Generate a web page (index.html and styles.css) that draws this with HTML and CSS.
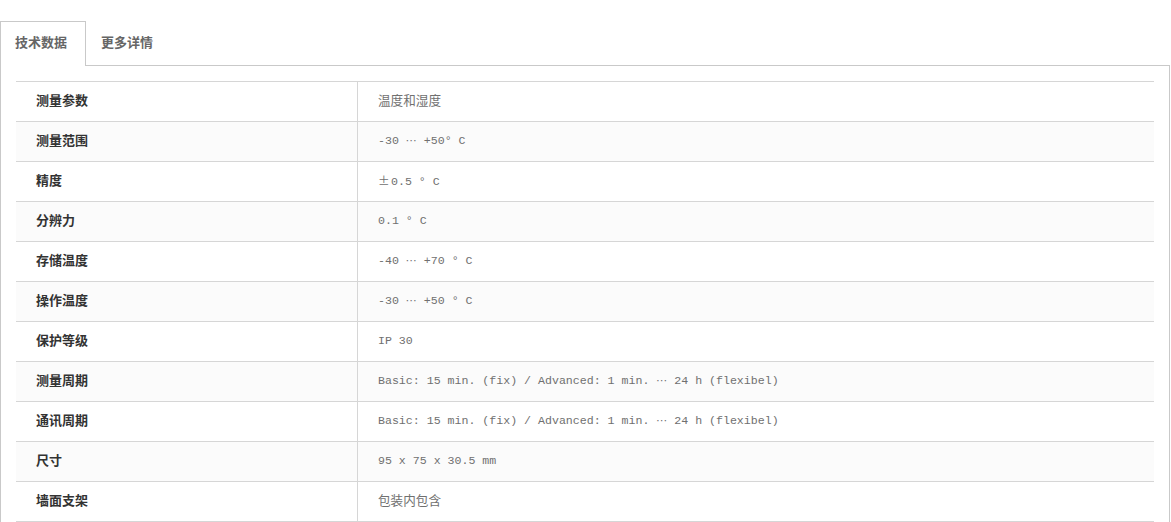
FILE: index.html
```html
<!DOCTYPE html>
<html lang="zh-CN">
<head>
<meta charset="utf-8">
<title>技术数据</title>
<link rel="stylesheet" href="styles.css">
</head>
<body>
<div class="wrap">
  <ul class="tabs">
    <li class="tab active">技术数据</li>
    <li class="tab">更多详情</li>
  </ul>
  <div class="panel">
    <table class="spec">
      <tbody>
        <tr><th>测量参数</th><td class="cjk">温度和湿度</td></tr>
        <tr><th>测量范围</th><td>-30 <span class="ell">⋯</span> +50° C</td></tr>
        <tr><th>精度</th><td><span class="pm">±</span>0.5 ° C</td></tr>
        <tr><th>分辨力</th><td>0.1 ° C</td></tr>
        <tr><th>存储温度</th><td>-40 <span class="ell">⋯</span> +70 ° C</td></tr>
        <tr><th>操作温度</th><td>-30 <span class="ell">⋯</span> +50 ° C</td></tr>
        <tr><th>保护等级</th><td>IP 30</td></tr>
        <tr><th>测量周期</th><td>Basic: 15 min. (fix) / Advanced: 1 min. <span class="ell">⋯</span> 24 h (flexibel)</td></tr>
        <tr><th>通讯周期</th><td>Basic: 15 min. (fix) / Advanced: 1 min. <span class="ell">⋯</span> 24 h (flexibel)</td></tr>
        <tr><th>尺寸</th><td>95 x 75 x 30.5 mm</td></tr>
        <tr><th>墙面支架</th><td class="cjk">包装内包含</td></tr>
      </tbody>
    </table>
  </div>
</div>
</body>
</html>
```

FILE: styles.css
```css
html, body {
  margin: 0;
  padding: 0;
  background: #fff;
}
body {
  font-family: "Noto Sans CJK SC", "Liberation Sans", sans-serif;
  overflow: hidden;
}
.wrap {
  padding-top: 21px;
  width: 1170px;
}
.tabs {
  list-style: none;
  margin: 0;
  padding: 0;
  display: flex;
  position: relative;
  z-index: 1;
}
.tab {
  height: 44px;
  line-height: 40px;
  padding: 0 14px;
  border: 1px solid transparent;
  border-bottom: none;
  margin-bottom: -1px;
  font-size: 13px;
  font-weight: bold;
  color: #666;
  background: transparent;
}
.tab.active {
  width: 56px;
  border-color: #c9c9c9;
  background: #fff;
}
.panel {
  border: 1px solid #c9c9c9;
  border-bottom: none;
  padding: 15px 15px 0 15px;
}
.spec {
  width: 1138px;
  border-collapse: collapse;
}
.spec tr {
  height: 40px;
}
.spec tr:nth-child(even) {
  background: #fbfbfb;
}
.spec th, .spec td {
  padding: 0 0 3px 20px;
  border-top: 1px solid #d6d6d6;
  border-bottom: 1px solid #d6d6d6;
  text-align: left;
  vertical-align: middle;
  line-height: 16px;
}
.spec th {
  width: 321px;
  border-right: 1px solid #d6d6d6;
  font-size: 13px;
  font-weight: bold;
  color: #333;
}
.spec td {
  font-family: "Liberation Mono", "Noto Sans CJK SC", monospace;
  font-size: 11.6px;
  color: #707070;
  padding-bottom: 1px;
}
.spec td.cjk {
  font-family: "Noto Sans CJK SC", sans-serif;
  font-size: 12.6px;
  padding-bottom: 3px;
}
.ell {
  font-family: "DejaVu Sans", "Noto Sans CJK SC", sans-serif;
  font-size: 11px;
}
.pm {
  font-family: "Noto Sans CJK SC", sans-serif;
  display: inline-block;
  width: 13px;
}
```
